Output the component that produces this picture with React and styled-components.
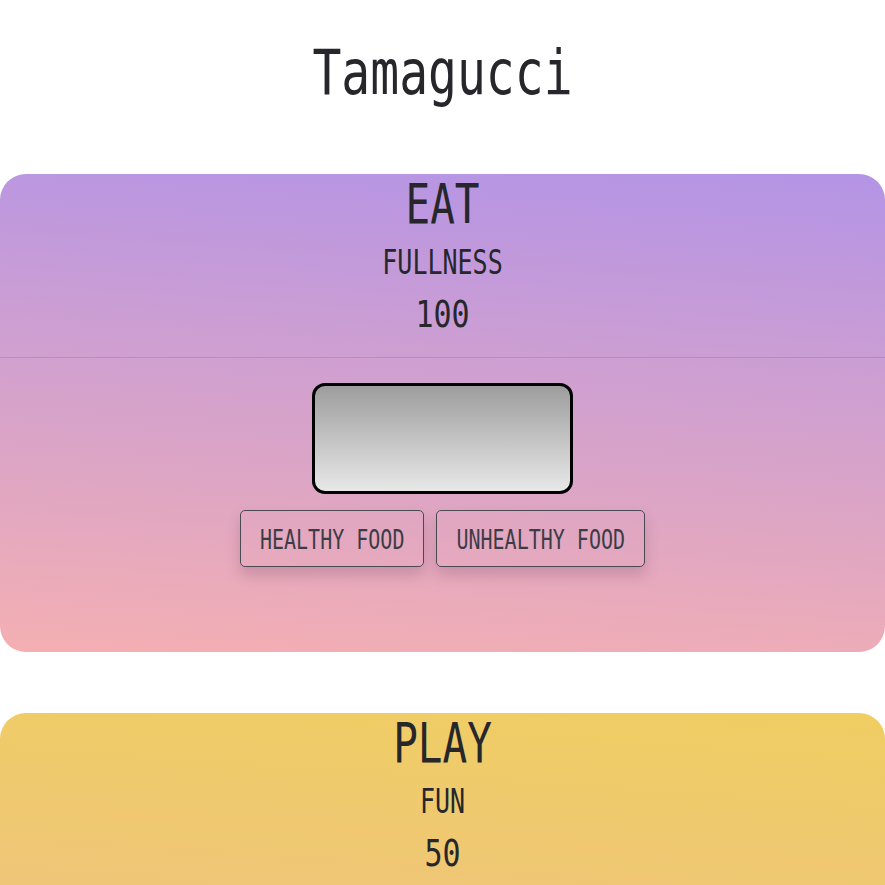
import styled, { createGlobalStyle } from "styled-components";

const GlobalStyle = createGlobalStyle`
	body {
		margin: 0;
		background: #ffffff;
		font-family: "DejaVu Sans Mono", "Liberation Mono", monospace;
		color: #26262b;
	}
`;

const Page = styled.main`
	display: flex;
	flex-direction: column;
	align-items: center;
	padding-top: 42px;
`;

/* the reference font is a tall, narrow monospace: stretch glyphs vertically */
const Tall = styled.span`
	display: inline-block;
	transform: scaleY(${({ $s }) => $s || 1.33});
`;

const Title = styled.h1`
	margin: 0 0 72px;
	font-size: 48px;
	font-weight: 400;
	line-height: 60px;
`;

const Cards = styled.section`
	width: 100%;
	display: flex;
	flex-direction: column;
	gap: 61px;
`;

const Card = styled.article`
	width: 100%;
	border-radius: 26px;
	overflow: hidden;
	background: ${({ $from, $to }) => `linear-gradient(184deg, ${$from}, ${$to})`};
`;

const CardHead = styled.header`
	height: 184px;
	box-sizing: border-box;
	display: flex;
	flex-direction: column;
	align-items: center;
	padding-top: 1px;
	border-bottom: 1px solid rgba(110, 70, 120, 0.2);
`;

const Action = styled.h2`
	margin: 0;
	font-size: 41px;
	font-weight: 400;
	line-height: 58px;
`;

const StatName = styled.p`
	margin: 15px 0 0;
	font-size: 25px;
	line-height: 30px;
`;

const StatValue = styled.p`
	margin: 18px 0 0;
	font-size: 30px;
	line-height: 36px;
`;

const CardBody = styled.div`
	display: flex;
	flex-direction: column;
	align-items: center;
	gap: 16px;
	padding: 25px 0 85px;
`;

const Screen = styled.div`
	width: 255px;
	height: 105px;
	border: 3px solid #000;
	border-radius: 13px;
	background: linear-gradient(180deg, #9d9d9d, #e8e8e8);
`;

const Buttons = styled.div`
	display: flex;
	gap: 12px;
`;

const Btn = styled.button`
	height: 57px;
	padding: 0 19px;
	border: 1px solid #4a4a52;
	border-radius: 5px;
	background: transparent;
	font-family: inherit;
	font-size: 20px;
	line-height: 24px;
	color: #3c3c46;
	box-shadow: 0 8px 14px rgba(90, 50, 80, 0.22);
`;

const cards = [
	{
		action: "EAT",
		stat: "FULLNESS",
		value: 100,
		from: "#b494e6",
		to: "#f4afb2",
		buttons: ["HEALTHY FOOD", "UNHEALTHY FOOD"],
	},
	{
		action: "PLAY",
		stat: "FUN",
		value: 50,
		from: "#f0ce62",
		to: "#eebb96",
		buttons: ["BALL", "VIDEO GAMES"],
	},
];

const App = () => {
	return (
		<Page>
			<GlobalStyle />
			<Title>
				<Tall $s={1.3}>Tamagucci</Tall>
			</Title>
			<Cards>
				{cards.map((c) => (
					<Card key={c.action} $from={c.from} $to={c.to}>
						<CardHead>
							<Action>
								<Tall>{c.action}</Tall>
							</Action>
							<StatName>
								<Tall $s={1.37}>{c.stat}</Tall>
							</StatName>
							<StatValue>
								<Tall $s={1.25}>{c.value}</Tall>
							</StatValue>
						</CardHead>
						<CardBody>
							<Screen />
							<Buttons>
								{c.buttons.map((b) => (
									<Btn key={b}>
										<Tall $s={1.37}>{b}</Tall>
									</Btn>
								))}
							</Buttons>
						</CardBody>
					</Card>
				))}
			</Cards>
		</Page>
	);
};

export default App;
